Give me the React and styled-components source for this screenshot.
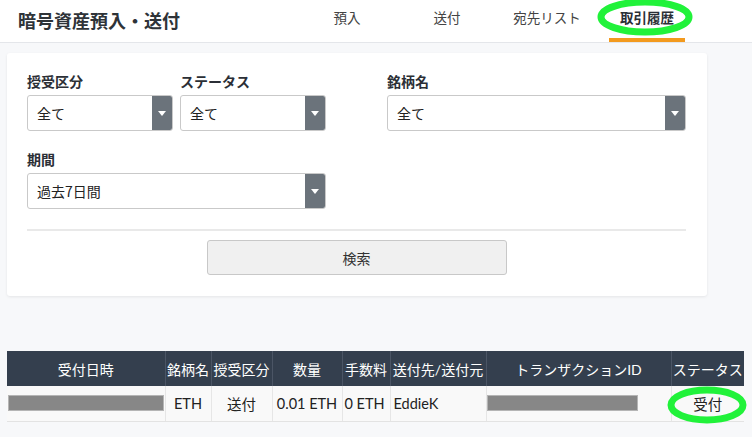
import React from "react";
import styled, { createGlobalStyle } from "styled-components";

const Global = createGlobalStyle`
  html, body { margin: 0; padding: 0; background: #f7f8fa; }
  body { font-family: Lato, "Noto Sans CJK JP", sans-serif; color: #333; }
  * { box-sizing: border-box; }
`;

const Page = styled.div`
  position: relative;
  width: 752px;
  height: 437px;
  overflow: hidden;
  background: #f7f8fa;
`;

const Header = styled.header`
  height: 43px;
  background: #fff;
  border-bottom: 1px solid #e4e6ea;
  display: flex;
  align-items: stretch;
`;

const Title = styled.h1`
  margin: 0;
  padding-left: 18px;
  font-size: 18px;
  font-weight: 700;
  color: #2e3338;
  line-height: 40px;
  font-family: "Noto Sans CJK JP", sans-serif;
`;

const Nav = styled.nav`
  margin-left: auto;
  margin-right: 67px;
  display: flex;
  gap: 24px;
`;

const Tab = styled.div`
  width: 76px;
  height: 42px;
  display: flex;
  align-items: center;
  justify-content: center;
  padding-bottom: 4px;
  font-size: 13.5px;
  font-family: "Noto Sans CJK JP", sans-serif;
  font-weight: ${(p) => (p.$active ? 700 : 400)};
  color: ${(p) => (p.$active ? "#2b2f36" : "#444")};
  border-bottom: 4px solid ${(p) => (p.$active ? "#f39a1e" : "transparent")};
`;

const Card = styled.section`
  margin: 10px 0 0 7px;
  width: 700px;
  background: #fff;
  border-radius: 3px;
  box-shadow: 0 1px 3px rgba(0, 0, 0, 0.08);
  padding: 19px 21px 21px 20px;
`;

const FormGrid = styled.div`
  display: grid;
  grid-template-columns: 1fr 1fr;
  column-gap: 61px;
  row-gap: 19px;
`;

const SubGrid = styled.div`
  display: grid;
  grid-template-columns: 1fr 1fr;
  column-gap: 7px;
`;

const Field = styled.div`
  display: flex;
  flex-direction: column;
`;

const Label = styled.label`
  font-size: 14px;
  font-weight: 700;
  line-height: 18px;
  margin-bottom: 5px;
  color: #2b2f36;
  font-family: "Noto Sans CJK JP", sans-serif;
`;

const Select = styled.div`
  height: 36px;
  border: 1px solid #c9c9c9;
  border-radius: 3px;
  display: flex;
  align-items: stretch;
  overflow: hidden;
  background: #fff;
`;

const SelectValue = styled.div`
  flex: 1;
  display: flex;
  align-items: center;
  padding-left: 9px;
  font-size: 14px;
  color: #222;
  font-family: "Noto Sans CJK JP", sans-serif;
`;

const Arrow = styled.div`
  width: 20px;
  background: #6b737b;
  display: flex;
  align-items: center;
  justify-content: center;
  &::after {
    content: "";
    border-left: 4px solid transparent;
    border-right: 4px solid transparent;
    border-top: 5px solid #fff;
  }
`;

const Divider = styled.hr`
  margin: 20px 0 9px;
  border: 0;
  border-top: 2px solid #e9e9e9;
`;

const ButtonRow = styled.div`
  display: flex;
  justify-content: center;
`;

const Button = styled.button`
  width: 300px;
  height: 35px;
  background: #f0f0f0;
  border: 1px solid #c8c8c8;
  border-radius: 3px;
  font-size: 14px;
  color: #333;
  font-family: "Noto Sans CJK JP", sans-serif;
`;

const Table = styled.table`
  margin: 55px 0 0 7px;
  width: 737px;
  border-collapse: collapse;
  table-layout: fixed;
  font-family: Lato, "Noto Sans CJK JP", sans-serif;
`;

const Th = styled.th`
  height: 35px;
  background: #343f4e;
  color: #fff;
  font-weight: 400;
  font-size: 14px;
  text-align: center;
  padding: 0;
  border-left: 1px solid #4b5565;
  white-space: nowrap;
  overflow: hidden;
  &:first-child { border-left: 0; }
`;

const Td = styled.td`
  height: 35px;
  background: #f9f9f9;
  border-left: 1px solid #e6e6e6;
  border-bottom: 1px solid #e3e3e3;
  font-size: 14.5px;
  color: #222;
  text-align: ${(p) => p.$align || "center"};
  padding: 0 ${(p) => (p.$align === "left" ? "3px" : "0")};
  white-space: nowrap;
  overflow: hidden;
  &:first-child { border-left: 0; }
`;

const Redact = styled.div`
  height: 16px;
  background: #878787;
  width: ${(p) => p.$w}px;
  border: 1px solid #b5b5b5;
`;

const Annotation = styled.svg`
  position: absolute;
  left: 0;
  top: 0;
  pointer-events: none;
`;

const cols = [158, 46, 61, 70, 48, 96, 185, 73];
const heads = ["受付日時", "銘柄名", "授受区分", "数量", "手数料", "送付先/送付元", "トランザクションID", "ステータス"];

export default function App() {
  return (
    <Page>
      <Global />
      <Header>
        <Title>暗号資産預入・送付</Title>
        <Nav>
          <Tab>預入</Tab>
          <Tab>送付</Tab>
          <Tab>宛先リスト</Tab>
          <Tab $active>取引履歴</Tab>
        </Nav>
      </Header>
      <Card>
        <FormGrid>
          <SubGrid>
            <Field>
              <Label>授受区分</Label>
              <Select><SelectValue>全て</SelectValue><Arrow /></Select>
            </Field>
            <Field>
              <Label>ステータス</Label>
              <Select><SelectValue>全て</SelectValue><Arrow /></Select>
            </Field>
          </SubGrid>
          <Field>
            <Label>銘柄名</Label>
            <Select><SelectValue>全て</SelectValue><Arrow /></Select>
          </Field>
          <Field>
            <Label>期間</Label>
            <Select><SelectValue>過去7日間</SelectValue><Arrow /></Select>
          </Field>
        </FormGrid>
        <Divider />
        <ButtonRow>
          <Button>検索</Button>
        </ButtonRow>
      </Card>
      <Table>
        <colgroup>
          {cols.map((w, i) => <col key={i} style={{ width: w }} />)}
        </colgroup>
        <thead>
          <tr>{heads.map((h) => <Th key={h}>{h}</Th>)}</tr>
        </thead>
        <tbody>
          <tr>
            <Td $align="left" style={{ padding: "0 1px" }}><Redact $w={156} /></Td>
            <Td>ETH</Td>
            <Td>送付</Td>
            <Td>0.01 ETH</Td>
            <Td $align="left" style={{ padding: "0 2px" }}>0 ETH</Td>
            <Td $align="left">EddieK</Td>
            <Td $align="left" style={{ padding: 0 }}><Redact $w={151} /></Td>
            <Td>受付</Td>
          </tr>
        </tbody>
      </Table>
      <Annotation width="752" height="437" viewBox="0 0 752 437">
        <ellipse cx="645" cy="17" rx="44" ry="15" fill="none" stroke="#21f23a" strokeWidth="7" />
        <ellipse cx="707" cy="405" rx="36" ry="15" fill="none" stroke="#21f23a" strokeWidth="7" />
      </Annotation>
    </Page>
  );
}
